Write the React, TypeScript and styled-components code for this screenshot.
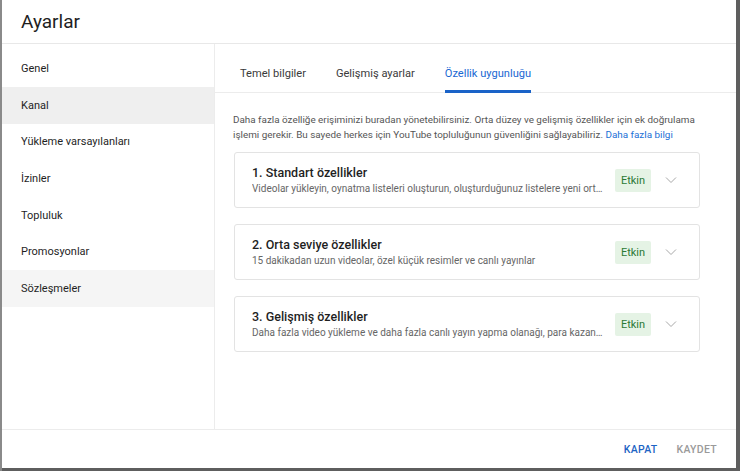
import React from "react";
import styled, { createGlobalStyle } from "styled-components";

const Global = createGlobalStyle`
  html, body { margin: 0; padding: 0; }
  body {
    background: #5e5e5e;
    font-family: Roboto, "Noto Sans", Arial, sans-serif;
    width: 740px;
    height: 471px;
    overflow: hidden;
  }
`;

const Backdrop = styled.div`
  width: 740px;
  height: 471px;
  display: flex;
  background: linear-gradient(to right, #8a8a8a 0, #8a8a8a 2px, #5e5e5e 2px);
`;

const Dialog = styled.div`
  margin-left: 2px;
  width: 734px;
  height: 468px;
  background: #fff;
  display: flex;
  flex-direction: column;
`;

const Header = styled.div`
  height: 43px;
  display: flex;
  align-items: center;
  padding-left: 19px;
  border-bottom: 1px solid #e8e8e8;
  box-sizing: content-box;
`;

const Title = styled.h1`
  margin: 0;
  font-size: 19px;
  font-weight: 400;
  color: #1f1f1f;
`;

const Body = styled.div`
  flex: 1;
  display: flex;
  min-height: 0;
`;

const Sidebar = styled.nav`
  width: 212px;
  border-right: 1px solid #ececec;
  padding-top: 6.4px;
  display: flex;
  flex-direction: column;
`;

const NavItem = styled.div<{ $bg?: string }>`
  height: 36.6px;
  display: flex;
  align-items: center;
  padding-left: 19px;
  font-size: 11px;
  font-weight: 400;
  color: #1f1f1f;
  background: ${(p) => p.$bg || "transparent"};
`;

const Content = styled.div`
  flex: 1;
  display: flex;
  flex-direction: column;
`;

const TabBar = styled.div`
  height: 48px;
  border-bottom: 1px solid #ececec;
  display: flex;
  align-items: stretch;
  padding-left: 25px;
  gap: 30px;
`;

const Tab = styled.div<{ $active?: boolean }>`
  display: flex;
  align-items: center;
  padding-top: 12px;
  font-size: 11.1px;
  font-weight: 400;
  color: ${(p) => (p.$active ? "#1967d2" : "#3a3a3a")};
  border-bottom: 3px solid ${(p) => (p.$active ? "#1a63c8" : "transparent")};
  box-sizing: border-box;
  margin-bottom: -1px;
`;

const Panel = styled.div`
  padding: 19px 36px 0 18px;
  display: flex;
  flex-direction: column;
`;

const Description = styled.p`
  margin: 0 0 10px 0;
  font-size: 9.9px;
  line-height: 15px;
  color: #555;
`;

const Link = styled.a`
  color: #1a6fd6;
  text-decoration: none;
`;

const Cards = styled.div`
  display: flex;
  flex-direction: column;
  gap: 16px;
  margin-left: 1px;
`;

const Card = styled.div`
  height: 56px;
  box-sizing: border-box;
  border: 1px solid #e3e3e3;
  border-radius: 3px;
  display: flex;
  align-items: center;
  padding: 0 21px 0 17px;
`;

const CardText = styled.div`
  flex: 1;
  min-width: 0;
  display: flex;
  flex-direction: column;
  gap: 2px;
`;

const CardTitle = styled.div`
  font-size: 12.5px;
  font-weight: 500;
  color: #1f1f1f;
  line-height: 15px;
`;

const CardSub = styled.div`
  font-size: 10px;
  color: #666;
  line-height: 13px;
  max-width: 354px;
  white-space: nowrap;
  overflow: hidden;
  text-overflow: ellipsis;
`;

const Badge = styled.span`
  width: 36px;
  height: 23px;
  display: flex;
  align-items: center;
  justify-content: center;
  background: #e5f3e5;
  color: #2b7a35;
  font-size: 11px;
  font-weight: 400;
  border-radius: 2px;
  margin-right: 13px;
`;

const Chevron = styled.svg`
  width: 14px;
  height: 14px;
  display: block;
`;

const Footer = styled.div`
  height: 38px;
  border-top: 1px solid #ececec;
  display: flex;
  align-items: center;
  justify-content: flex-end;
  gap: 19px;
  padding-right: 19px;
`;

const FooterButton = styled.button<{ $primary?: boolean }>`
  border: none;
  background: none;
  padding: 0;
  font-family: inherit;
  font-size: 10.5px;
  font-weight: 500;
  letter-spacing: 0.3px;
  color: ${(p) => (p.$primary ? "#1d64c4" : "#9a9a9a")};
  text-transform: uppercase;
`;

const navItems: { label: string; bg?: string }[] = [
  { label: "Genel" },
  { label: "Kanal", bg: "#efefef" },
  { label: "Yükleme varsayılanları" },
  { label: "İzinler" },
  { label: "Topluluk" },
  { label: "Promosyonlar" },
  { label: "Sözleşmeler", bg: "#f5f5f5" },
];

const features = [
  {
    title: "1. Standart özellikler",
    sub: "Videolar yükleyin, oynatma listeleri oluşturun, oluşturduğunuz listelere yeni ortak çalışanlar ekleyin",
  },
  {
    title: "2. Orta seviye özellikler",
    sub: "15 dakikadan uzun videolar, özel küçük resimler ve canlı yayınlar",
  },
  {
    title: "3. Gelişmiş özellikler",
    sub: "Daha fazla video yükleme ve daha fazla canlı yayın yapma olanağı, para kazanma başvurusu",
  },
];

export default function App() {
  return (
    <>
      <Global />
      <Backdrop>
        <Dialog>
          <Header>
            <Title>Ayarlar</Title>
          </Header>
          <Body>
            <Sidebar>
              {navItems.map((n) => (
                <NavItem key={n.label} $bg={n.bg}>
                  {n.label}
                </NavItem>
              ))}
            </Sidebar>
            <Content>
              <TabBar>
                <Tab>Temel bilgiler</Tab>
                <Tab>Gelişmiş ayarlar</Tab>
                <Tab $active>Özellik uygunluğu</Tab>
              </TabBar>
              <Panel>
                <Description>
                  Daha fazla özelliğe erişiminizi buradan yönetebilirsiniz. Orta düzey ve gelişmiş özellikler için ek doğrulama
                  işlemi gerekir. Bu sayede herkes için YouTube topluluğunun güvenliğini sağlayabiliriz.{" "}
                  <Link>Daha fazla bilgi</Link>
                </Description>
                <Cards>
                  {features.map((f) => (
                    <Card key={f.title}>
                      <CardText>
                        <CardTitle>{f.title}</CardTitle>
                        <CardSub>{f.sub}</CardSub>
                      </CardText>
                      <Badge>Etkin</Badge>
                      <Chevron viewBox="0 0 14 14">
                        <path d="M2 4.5 L7 9.5 L12 4.5" fill="none" stroke="#a8a8a8" strokeWidth="1" />
                      </Chevron>
                    </Card>
                  ))}
                </Cards>
              </Panel>
            </Content>
          </Body>
          <Footer>
            <FooterButton $primary>Kapat</FooterButton>
            <FooterButton>Kaydet</FooterButton>
          </Footer>
        </Dialog>
      </Backdrop>
    </>
  );
}
